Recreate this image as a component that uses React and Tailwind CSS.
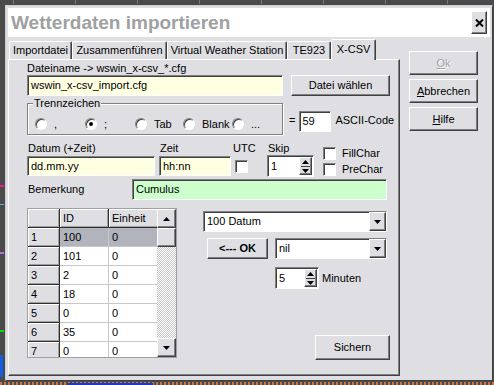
// App.jsx - "Wetterdaten importieren" dialog, X-CSV tab
const raised = 'border border-t-white border-l-white border-r-[#404040] border-b-[#404040] shadow-[inset_-1px_-1px_0_#808080]'
const sunken = 'border border-t-[#808080] border-l-[#808080] border-r-white border-b-white shadow-[inset_1px_1px_0_#404040]'

const rows = [
  ['1', '100', '0'],
  ['2', '101', '0'],
  ['3', '2', '0'],
  ['4', '18', '0'],
  ['5', '0', '0'],
  ['6', '35', '0'],
  ['7', '0', '0'],
]

function Tri({ up = false }) {
  return (
    <svg width="7" height="4" viewBox="0 0 7 4" className="block">
      <polygon points={up ? '3.5,0 7,4 0,4' : '0,0 7,0 3.5,4'} fill="#000" />
    </svg>
  )
}

function Combo({ value, className }) {
  return (
    <div className={`flex bg-white ${sunken} ${className}`}>
      <span className="flex-1 pl-[3px] self-center">{value}</span>
      <div className={`w-[17px] bg-[#dfdfe3] flex items-center justify-center ${raised}`}>
        <Tri />
      </div>
    </div>
  )
}

function Spinner({ value, className }) {
  return (
    <div className={`flex bg-white ${sunken} ${className}`}>
      <span className="flex-1 pl-[3px] self-center">{value}</span>
      <div className={`w-[13px] my-[1px] mr-[1px] bg-[#dfdfe3] flex flex-col items-center justify-center gap-[2px] ${raised}`}>
        <Tri up />
        <div className="w-[9px] h-px bg-[#404040]" />
        <Tri />
      </div>
    </div>
  )
}

function Check() {
  return <div className={`w-[13px] h-[13px] bg-white shrink-0 ${sunken}`} />
}

function Radio({ checked, label, w }) {
  return (
    <div className={`flex items-center ${w}`}>
      <div className="w-[12px] h-[12px] shrink-0 rounded-full bg-white border border-t-[#808080] border-l-[#808080] border-r-white border-b-white shadow-[inset_1px_1px_0_#404040] flex items-center justify-center">
        {checked && <div className="w-[4px] h-[4px] rounded-full bg-black" />}
      </div>
      <span className="ml-[7px]">{label}</span>
    </div>
  )
}

function Btn({ children, className }) {
  return (
    <div className={`bg-[#dfdfe3] flex items-center justify-center ${raised} ${className}`}>{children}</div>
  )
}

export default function App() {
  return (
    <div className="w-[494px] h-[385px] bg-[#4a4a4a] pt-[5px] pl-[5px] relative overflow-hidden font-['Liberation_Sans',Arial,sans-serif] text-[11px] leading-none text-black whitespace-nowrap">
      {/* desktop bits behind the dialog */}
      <div className="absolute top-0 left-0 w-full h-[4px] bg-[repeating-linear-gradient(90deg,transparent_0_13px,#7a7a7a_13px_14px,transparent_14px_62px)]" />
      <div className="absolute left-0 top-[185px] w-[4px] h-[2px] bg-[#ff1493]" />
      <div className="absolute left-0 top-[204px] w-[4px] h-[1px] bg-[#40c0d0]" />
      <div className="absolute left-0 top-[252px] w-[4px] h-[2px] bg-[#b070e0]" />
      <div className="absolute left-0 top-[330px] w-[4px] h-[2px] bg-[#00e000]" />
      <div className="absolute left-0 top-[355px] w-[3px] h-[22px] bg-[#1060e0]" />
      <div className="absolute left-0 bottom-0 w-full h-[3px] bg-[repeating-linear-gradient(90deg,#c87848_0_2px,transparent_2px_4px)]" />
      <div className="absolute left-[68px] bottom-0 w-[85px] h-[2px] bg-[#1838c8]" />

      {/* Dialog */}
      <div className="relative w-[488px] h-[376px] bg-[#dfdfe3] border border-t-[#d0d0d0] border-l-[#d0d0d0] border-r-[#404040] border-b-[#404040] p-[2px] flex flex-col">
        {/* Title */}
        <div className="h-[29px] bg-white flex items-center justify-between pl-[3px] pr-[3px]">
          <span className="text-[19px] font-bold text-[#a0a0a0]">Wetterdaten importieren</span>
          <div className={`w-[16px] h-[23px] bg-[#dfdfe3] flex items-center justify-center ${raised}`}>
            <svg width="9" height="8" viewBox="0 0 9 8">
              <path d="M1 0.5 L8 7.5 M8 0.5 L1 7.5" stroke="#000" strokeWidth="2" />
            </svg>
          </div>
        </div>

        <div className="flex flex-1">
          {/* Tabs + panel */}
          <div className="w-[392px] flex flex-col pt-[2px]">
            <div className="h-[20px] flex items-end pl-[1px]">
              {[['Importdatei', 'w-[63px]'], ['Zusammenführen', 'w-[95px]'], ['Virtual Weather Station', 'w-[120px]'], ['TE923', 'w-[44px]']].map(([t, w]) => (
                <div key={t} className={`${w} h-[18px] flex items-center justify-center border border-b-0 border-t-white border-l-white border-r-[#404040] rounded-t-[2px] shadow-[inset_-1px_0_0_#808080]`}>
                  {t}
                </div>
              ))}
              <div className="relative z-10 w-[45px] h-[21px] -mb-px bg-[#dfdfe3] flex items-start pt-[4px] justify-center border border-b-0 border-t-white border-l-white border-r-[#404040] rounded-t-[2px] shadow-[inset_-1px_0_0_#808080]">
                X-CSV
              </div>
            </div>

            <div className={`h-[317px] pl-[18px] flex flex-col ${raised}`}>
              <div className="h-[14px] mt-[1px] leading-[14px]">Dateiname -&gt; wswin_x-csv_*.cfg</div>
              <div className="flex h-[21px]">
                <div className={`w-[256px] bg-[#ffffe1] flex items-center pl-[3px] ${sunken}`}>wswin_x-csv_import.cfg</div>
                <Btn className="ml-[8px] w-[99px]">Datei wählen</Btn>
              </div>

              {/* Trennzeichen */}
              <div className="flex items-start mt-[7px]">
                <div className="relative w-[256px] h-[32px] border border-[#808080] shadow-[inset_1px_1px_0_#fff,1px_1px_0_#fff] flex items-center pl-[7px] pt-[10px]">
                  <span className="absolute left-[5px] -top-[8px] bg-[#dfdfe3] px-[1px] leading-[14px]">Trennzeichen</span>
                  <Radio label="," w="w-[50px]" />
                  <Radio label=";" checked w="w-[50px]" />
                  <Radio label="Tab" w="w-[48px]" />
                  <Radio label="Blank" w="w-[49px]" />
                  <Radio label="..." />
                </div>
                <span className="ml-[6px] mt-[12px]">=</span>
                <div className={`ml-[4px] mt-[8px] w-[32px] h-[21px] bg-white flex items-center pl-[2px] ${sunken}`}>59</div>
                <span className="ml-[4px] mt-[12px]">ASCII-Code</span>
              </div>

              {/* Datum / Zeit / UTC / Skip */}
              <div className="flex items-start mt-[8px]">
                <div className="w-[128px] flex flex-col">
                  <span className="h-[13px] pl-[1px]">Datum (+Zeit)</span>
                  <div className={`h-[20px] bg-[#ffffe1] flex items-center pl-[3px] ${sunken}`}>dd.mm.yy</div>
                </div>
                <div className="ml-[4px] w-[72px] flex flex-col">
                  <span className="h-[13px] pl-[1px]">Zeit</span>
                  <div className={`h-[20px] bg-[#ffffe1] flex items-center pl-[3px] ${sunken}`}>hh:nn</div>
                </div>
                <div className="ml-[2px] w-[34px] flex flex-col">
                  <span className="h-[13px]">UTC</span>
                  <div className="mt-[4px] ml-[2px]"><Check /></div>
                </div>
                <div className="w-[47px] flex flex-col">
                  <span className="h-[12px] pl-[1px]">Skip</span>
                  <Spinner value="1" className="h-[22px]" />
                </div>
                <div className="ml-[9px] flex flex-col gap-[3px] mt-[4px]">
                  <div className="flex items-center"><Check /><span className="ml-[6px]">FillChar</span></div>
                  <div className="flex items-center"><Check /><span className="ml-[6px]">PreChar</span></div>
                </div>
              </div>

              {/* Bemerkung */}
              <div className="flex items-center h-[21px] mt-[2px]">
                <span className="w-[105px] pl-[1px]">Bemerkung</span>
                <div className={`w-[255px] h-[21px] bg-[#ccffcc] flex items-center pl-[3px] ${sunken}`}>Cumulus</div>
              </div>

              {/* Grid + mapping */}
              <div className="flex mt-[8px]">
                <div className="w-[150px] h-[150px] border border-[#a0a0a0] bg-[#dfdfe3] flex overflow-hidden">
                  <div className="w-[129px] flex flex-col">
                    {[['', 'ID', 'Einheit'], ...rows].map((r, i) => (
                      <div key={i} className="flex h-[19px] shrink-0">
                        <div className="w-[32px] pl-[3px] flex items-center border-r border-b border-r-[#303030] border-b-[#303030] bg-[#dfdfe3] shadow-[inset_1px_1px_0_#fff,inset_-1px_-1px_0_#a0a0a0]">{r[0]}</div>
                        {i === 0 ? (
                          <>
                            <div className="w-[49px] pl-[3px] flex items-center border-r border-b border-r-[#303030] border-b-[#303030] shadow-[inset_1px_1px_0_#fff,inset_-1px_-1px_0_#a0a0a0]">ID</div>
                            <div className="w-[48px] pl-[3px] flex items-center border-b border-b-[#303030] shadow-[inset_1px_1px_0_#fff,inset_0_-1px_0_#a0a0a0]">Einheit</div>
                          </>
                        ) : (
                          <>
                            <div className={`w-[49px] pl-[3px] flex items-center border-r border-b border-[#c8c8c8] ${i === 1 ? 'bg-[#b1b3bd]' : 'bg-white'}`}>{r[1]}</div>
                            <div className={`w-[48px] pl-[3px] flex items-center border-b border-[#c8c8c8] ${i === 1 ? 'bg-[#b1b3bd]' : 'bg-white'}`}>{r[2]}</div>
                          </>
                        )}
                      </div>
                    ))}
                  </div>
                  {/* scrollbar */}
                  <div className="w-[19px] flex flex-col">
                    <Btn className="h-[19px] shrink-0"><Tri up /></Btn>
                    <Btn className="h-[19px] shrink-0" />
                    <div className="flex-1 bg-[repeating-conic-gradient(#c8c8c8_0_25%,#fff_0_50%)] bg-[length:2px_2px]" />
                    <Btn className="h-[19px] shrink-0"><Tri /></Btn>
                  </div>
                </div>

                <div className="ml-[26px] flex flex-col">
                  <Combo value="100 Datum" className="mt-[3px] w-[184px] h-[21px]" />
                  <div className="flex mt-[6px]">
                    <Btn className="ml-[4px] w-[61px] h-[21px] font-bold">&lt;--- OK</Btn>
                    <Combo value="nil" className="ml-[7px] w-[112px] h-[21px]" />
                  </div>
                  <div className="flex items-center mt-[8px] ml-[72px]">
                    <Spinner value="5" className="w-[44px] h-[22px]" />
                    <span className="ml-[3px]">Minuten</span>
                  </div>
                  <Btn className="mt-[46px] ml-[112px] w-[75px] h-[25px]">Sichern</Btn>
                </div>
              </div>
            </div>
          </div>

          {/* Right buttons */}
          <div className="ml-[9px] pt-[14px] flex flex-col gap-[4px]">
            <Btn className="w-[69px] h-[24px] text-[#a0a0a0] [text-shadow:1px_1px_0_#fff]"><span><u>O</u>k</span></Btn>
            <Btn className="w-[69px] h-[24px]"><span><u>A</u>bbrechen</span></Btn>
            <Btn className="w-[69px] h-[24px]"><span><u>H</u>ilfe</span></Btn>
          </div>
        </div>
      </div>
    </div>
  )
}
